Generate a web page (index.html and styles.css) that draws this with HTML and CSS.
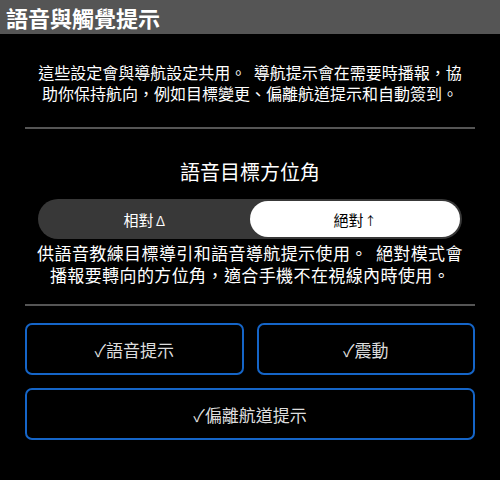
FILE: index.html
```html
<!DOCTYPE html>
<html lang="zh-Hant">
  <head>
    <meta charset="UTF-8" />
    <meta name="viewport" content="width=device-width, initial-scale=1.0" />
    <title>語音與觸覺提示</title>

    <link rel="stylesheet" href="styles.css">
  </head>
  <body>
    <header class="top-bar">語音與觸覺提示</header>

    <main class="content">
      <p class="intro">
        這些設定會與導航設定共用。 導航提示會在需要時播報，協<br />助你保持航向，例如目標變更、偏離航道提示和自動簽到。
      </p>

      <hr class="divider" />

      <h2 class="section-title">語音目標方位角</h2>

      <div class="segmented">
        <button class="segment">相對<span class="mark">∆</span></button>
        <button class="segment selected">絕對<span class="mark">↑</span></button>
      </div>

      <p class="note">
        供語音教練目標導引和語音導航提示使用。 絕對模式會<br />播報要轉向的方位角，適合手機不在視線內時使用。
      </p>

      <hr class="divider" />

      <div class="toggles">
        <button class="toggle">✓語音提示</button>
        <button class="toggle">✓震動</button>
        <button class="toggle wide">✓偏離航道提示</button>
      </div>
    </main>
  </body>
</html>
```

FILE: styles.css
```css
body {
  margin: 0;
  background-color: #000;
  color: #fff;
  font-family: "Noto Sans CJK TC", "Noto Sans", sans-serif;
}
.top-bar {
  background-color: #555;
  height: 34px;
  line-height: 34px;
  padding-left: 6px;
  font-size: 22px;
  font-weight: bold;
}
.content {
  padding: 0 25px;
}
.intro {
  margin: 28px 0 0;
  font-size: 16px;
  line-height: 21px;
  text-align: center;
  word-spacing: 4px;
}
.divider {
  border: none;
  height: 2px;
  background-color: #555;
  margin: 0;
}
.content > .divider:first-of-type {
  margin-top: 23px;
}
.section-title {
  margin: 29px 0 0;
  font-size: 20px;
  font-weight: normal;
  line-height: 28px;
  text-align: center;
}
.segmented {
  display: flex;
  margin: 13px 13px 0;
  padding: 2px;
  height: 36px;
  border-radius: 20px;
  background-color: #383838;
}
.segment {
  flex: 1;
  border: none;
  border-radius: 18px;
  background: none;
  color: #fff;
  font-family: inherit;
  font-size: 15px;
}
.segment .mark {
  font-size: 12px;
  margin-left: 1px;
}
.segment.selected {
  background-color: #fff;
  color: #000;
}
.note {
  margin: 3px 0 0;
  font-size: 17px;
  line-height: 22px;
  letter-spacing: 0.4px;
  word-spacing: 4px;
  text-align: center;
}
.note + .divider {
  margin-top: 18px;
}
.toggles {
  display: grid;
  grid-template-columns: 1fr 1fr;
  gap: 13px;
  margin-top: 17px;
}
.toggle {
  height: 52px;
  border: 2px solid #1565c8;
  border-radius: 7px;
  background-color: #000;
  color: #ddd;
  font-family: inherit;
  font-size: 17px;
}
.toggle.wide {
  grid-column: 1 / 3;
}
```
